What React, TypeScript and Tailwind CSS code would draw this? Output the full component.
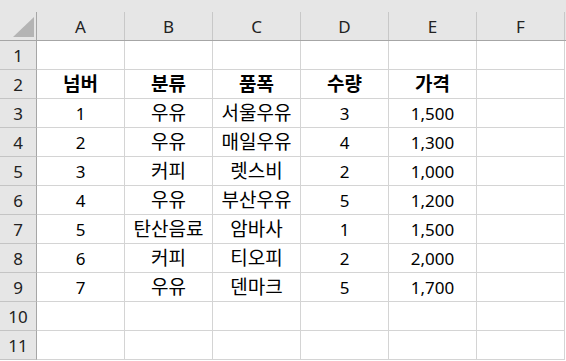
import React from "react";

const cols = ["A", "B", "C", "D", "E", "F"];
const data: string[][] = [
  ["", "", "", "", "", ""],
  ["넘버", "분류", "품폭", "수량", "가격", ""],
  ["1", "우유", "서울우유", "3", "1,500", ""],
  ["2", "우유", "매일우유", "4", "1,300", ""],
  ["3", "커피", "렛스비", "2", "1,000", ""],
  ["4", "우유", "부산우유", "5", "1,200", ""],
  ["5", "탄산음료", "암바사", "1", "1,500", ""],
  ["6", "커피", "티오피", "2", "2,000", ""],
  ["7", "우유", "덴마크", "5", "1,700", ""],
  ["", "", "", "", "", ""],
  ["", "", "", "", "", ""],
];

const font = { fontFamily: '"Noto Sans", "Noto Sans CJK KR", sans-serif' };
const isKo = (s: string) => /[가-힣]/.test(s);

export default function App() {
  return (
    <div className="w-[566px] h-[361px] bg-white overflow-hidden text-[17px]" style={font}>
      <div className="flex h-[41px] bg-[#e6e6e6] border-b border-[#a6a6a6]">
        <div className="w-[37px] h-full flex flex-col">
          <div className="h-[12px]" />
          <div className="flex-1 border-r border-[#a6a6a6] flex items-end justify-end pr-[2px] pb-[3px]">
            <svg width="21" height="20" viewBox="0 0 21 20">
              <polygon points="0,20 21,20 21,0" fill="#b4b4b4" />
            </svg>
          </div>
        </div>
        {cols.map((c) => (
          <div key={c} className="w-[88px] h-full flex flex-col">
            <div className="h-[12px]" />
            <div className="flex-1 border-r border-[#c8c8c8] flex items-center justify-center text-[#222] leading-none">
              {c}
            </div>
          </div>
        ))}
      </div>
      {data.map((row, i) => (
        <div key={i} className="flex h-[29px]">
          <div className="w-[37px] h-full bg-[#e6e6e6] border-r border-b border-r-[#a6a6a6] border-b-[#c4c4c4] flex items-center justify-center text-[#222] leading-none">
            {i + 1}
          </div>
          {row.map((v, j) => (
            <div
              key={j}
              className={
                "w-[88px] h-full border-r border-b border-[#d4d4d4] flex items-center justify-center text-black whitespace-nowrap leading-none " +
                (isKo(v) ? "text-[19px] " : "") +
                (i === 1 ? "font-bold" : "")
              }
            >
              {v}
            </div>
          ))}
        </div>
      ))}
    </div>
  );
}
